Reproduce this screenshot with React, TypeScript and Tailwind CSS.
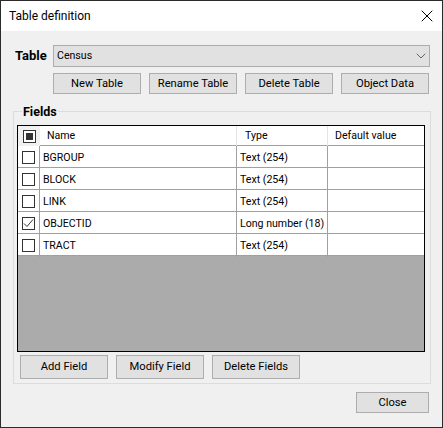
import { ChevronDown, X } from 'lucide-react';

const rows = [
  { name: 'BGROUP', type: 'Text (254)', checked: false },
  { name: 'BLOCK', type: 'Text (254)', checked: false },
  { name: 'LINK', type: 'Text (254)', checked: false },
  { name: 'OBJECTID', type: 'Long number (18)', checked: true },
  { name: 'TRACT', type: 'Text (254)', checked: false },
];

function Btn({ label, className }: { label: string; className: string }) {
  return (
    <button className={`border border-[#adadad] bg-[#e1e1e1] text-[11.2px] text-black leading-none ${className}`}>
      {label}
    </button>
  );
}

function Check({ checked }: { checked?: boolean }) {
  return (
    <span className="flex h-[13px] w-[13px] items-center justify-center border border-[#333] bg-white">
      {checked && (
        <svg width="11" height="11" viewBox="0 0 11 11" fill="none" stroke="#333" strokeWidth="1">
          <path d="M1 5.5 L4 8.5 L10 1.5" />
        </svg>
      )}
    </span>
  );
}

export default function App() {
  return (
    <div className="flex h-[428px] w-[443px] flex-col border border-[#2b2b2b] bg-[#f0f0f0] font-['Roboto',sans-serif] text-[12px] text-black">
      <div className="flex h-[30px] items-center justify-between bg-white pl-[8px] pr-[5px]">
        <span>Table definition</span>
        <X size={20} strokeWidth={1.2} />
      </div>

      <div className="flex flex-col pl-[12px] pr-[12px]">
        <div className="mt-[14px] flex items-center">
          <span className="w-[40px] pl-[2px] text-[13px] font-bold">Table</span>
          <div className="flex h-[22px] w-[377px] items-center justify-between border border-[#adadad] bg-[#e1e1e1] pl-[3px]">
            <span className="text-[10.6px]">Census</span>
            <ChevronDown size={16} strokeWidth={1.2} color="#444" />
          </div>
        </div>

        <div className="ml-[40px] mt-[6px] flex gap-[8px]">
          <Btn label="New Table" className="h-[21px] w-[88px]" />
          <Btn label="Rename Table" className="h-[21px] w-[88px]" />
          <Btn label="Delete Table" className="h-[21px] w-[88px]" />
          <Btn label="Object Data" className="h-[21px] w-[88px]" />
        </div>

        <div className="relative mt-[17px] flex h-[273px] w-[418px] flex-col border border-[#dcdcdc] px-[3px] pt-[13px]">
          <span className="absolute -top-[8px] left-[8px] bg-[#f0f0f0] px-[1px] text-[12.5px] font-bold leading-[16px]">Fields</span>

          <div className="flex h-[227px] w-[408px] flex-col border border-black bg-[#ababab] text-[10.6px]">
            <div className="grid h-[20px] grid-cols-[22px_197px_91px_1fr] border-b border-[#a0a0a0] bg-white">
              <div className="flex items-center justify-center bg-[#f0f0f0]">
                <span className="flex h-[13px] w-[13px] items-center justify-center border border-[#333] bg-white">
                  <span className="h-[7px] w-[7px] bg-[#333]" />
                </span>
              </div>
              <div className="border-r border-[#e4e4e4] pl-[7px] leading-[20px]">Name</div>
              <div className="border-r border-[#e4e4e4] pl-[8px] leading-[20px]">Type</div>
              <div className="pl-[7px] leading-[20px]">Default value</div>
            </div>
            {rows.map((r) => (
              <div key={r.name} className="grid h-[22px] grid-cols-[22px_197px_91px_1fr] border-b border-[#a0a0a0] bg-white">
                <div className="flex items-center justify-center border-r border-[#a0a0a0]">
                  <Check checked={r.checked} />
                </div>
                <div className="border-r border-[#a0a0a0] pl-[3px] leading-[23px]">{r.name}</div>
                <div className="border-r border-[#a0a0a0] pl-[3px] leading-[23px] whitespace-nowrap">{r.type}</div>
                <div />
              </div>
            ))}
          </div>

          <div className="ml-[3px] mt-[3px] flex gap-[8px]">
            <Btn label="Add Field" className="h-[24px] w-[88px]" />
            <Btn label="Modify Field" className="h-[24px] w-[88px]" />
            <Btn label="Delete Fields" className="h-[24px] w-[88px]" />
          </div>
        </div>

        <div className="mt-[8px] flex justify-end pr-[1px]">
          <Btn label="Close" className="h-[21px] w-[73px]" />
        </div>
      </div>
    </div>
  );
}
